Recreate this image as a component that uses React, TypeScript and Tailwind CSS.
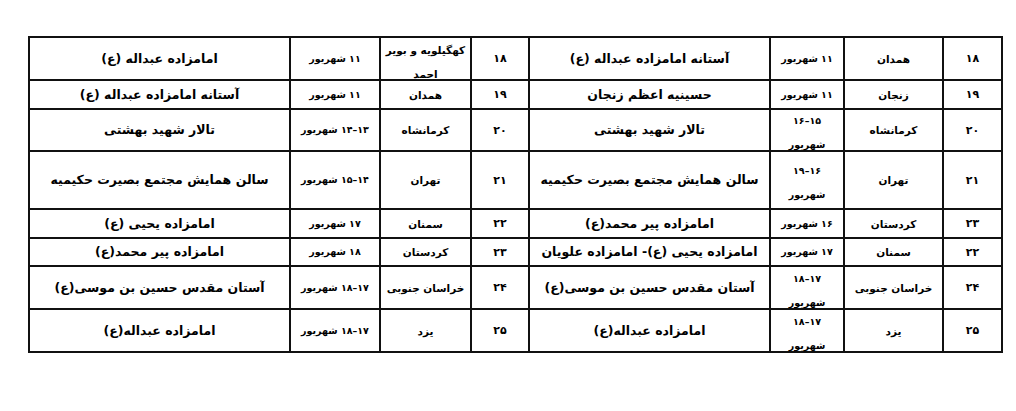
import React from "react";

type Entry = {
  num: string;
  province: string;
  date: string;
  venue: string;
};

type Row = {
  height: number;
  right: Entry;
  left: Entry;
};

const rows: Row[] = [
  {
    height: 43,
    right: { num: "۱۸", province: "همدان", date: "۱۱ شهریور", venue: "آستانه امامزاده عبداله (ع)" },
    left: { num: "۱۸", province: "کهگیلویه و بویر\nاحمد", date: "۱۱ شهریور", venue: "امامزاده عبداله (ع)" },
  },
  {
    height: 29,
    right: { num: "۱۹", province: "زنجان", date: "۱۱ شهریور", venue: "حسینیه اعظم زنجان" },
    left: { num: "۱۹", province: "همدان", date: "۱۱ شهریور", venue: "آستانه امامزاده عبداله (ع)" },
  },
  {
    height: 42,
    right: { num: "۲۰", province: "کرمانشاه", date: "۱۵–۱۶\nشهریور", venue: "تالار شهید بهشتی" },
    left: { num: "۲۰", province: "کرمانشاه", date: "۱۳–۱۴ شهریور", venue: "تالار شهید بهشتی" },
  },
  {
    height: 58,
    right: { num: "۲۱", province: "تهران", date: "۱۶–۱۹\nشهریور", venue: "سالن همایش مجتمع بصیرت حکیمیه" },
    left: { num: "۲۱", province: "تهران", date: "۱۴–۱۵ شهریور", venue: "سالن همایش مجتمع بصیرت حکیمیه" },
  },
  {
    height: 29,
    right: { num: "۲۳", province: "کردستان", date: "۱۶ شهریور", venue: "امامزاده پیر محمد(ع)" },
    left: { num: "۲۲", province: "سمنان", date: "۱۷ شهریور", venue: "امامزاده یحیی (ع)" },
  },
  {
    height: 28,
    right: { num: "۲۲", province: "سمنان", date: "۱۷ شهریور", venue: "امامزاده یحیی (ع)- امامزاده علویان" },
    left: { num: "۲۳", province: "کردستان", date: "۱۸ شهریور", venue: "امامزاده پیر محمد(ع)" },
  },
  {
    height: 43,
    right: { num: "۲۴", province: "خراسان جنوبی", date: "۱۷–۱۸\nشهریور", venue: "آستان مقدس حسین بن موسی(ع)" },
    left: { num: "۲۴", province: "خراسان جنوبی", date: "۱۷–۱۸ شهریور", venue: "آستان مقدس حسین بن موسی(ع)" },
  },
  {
    height: 43,
    right: { num: "۲۵", province: "یزد", date: "۱۷–۱۸\nشهریور", venue: "امامزاده عبداله(ع)" },
    left: { num: "۲۵", province: "یزد", date: "۱۷–۱۸ شهریور", venue: "امامزاده عبداله(ع)" },
  },
];

function Cell({
  h,
  className,
  children,
}: {
  h: number;
  className: string;
  children: string;
}) {
  const multi = children.includes("\n");
  return (
    <td className="border-2 border-[#111] p-0 align-middle text-center">
      <div
        className={`flex items-center justify-center overflow-visible whitespace-pre-line font-bold ${
          multi ? "pt-[6px]" : ""
        } ${className}`}
        style={{ height: h - 2 }}
      >
        <span>{children}</span>
      </div>
    </td>
  );
}

function Half({ e, h }: { e: Entry; h: number }) {
  return (
    <>
      <Cell h={h} className="text-[11px] leading-[23px]">{e.num}</Cell>
      <Cell h={h} className="text-[10.5px] leading-[24px]">{e.province}</Cell>
      <Cell h={h} className="text-[9.5px] leading-[24px]">{e.date}</Cell>
      <Cell h={h} className="text-[12.5px] leading-[20px]">{e.venue}</Cell>
    </>
  );
}

export default function App() {
  return (
    <div
      className="w-[1016px] h-[411px] bg-white text-black pt-[36px] pl-[28px]"
      style={{ fontFamily: '"DejaVu Sans", sans-serif' }}
    >
      <table dir="rtl" className="table-fixed border-collapse w-[973px]">
        <colgroup>
          <col className="w-[59px]" />
          <col className="w-[99px]" />
          <col className="w-[74px]" />
          <col className="w-[241px]" />
          <col className="w-[58px]" />
          <col className="w-[91px]" />
          <col className="w-[90px]" />
          <col className="w-[261px]" />
        </colgroup>
        <tbody>
          {rows.map((r, i) => (
            <tr key={i}>
              <Half e={r.right} h={r.height} />
              <Half e={r.left} h={r.height} />
            </tr>
          ))}
        </tbody>
      </table>
    </div>
  );
}
